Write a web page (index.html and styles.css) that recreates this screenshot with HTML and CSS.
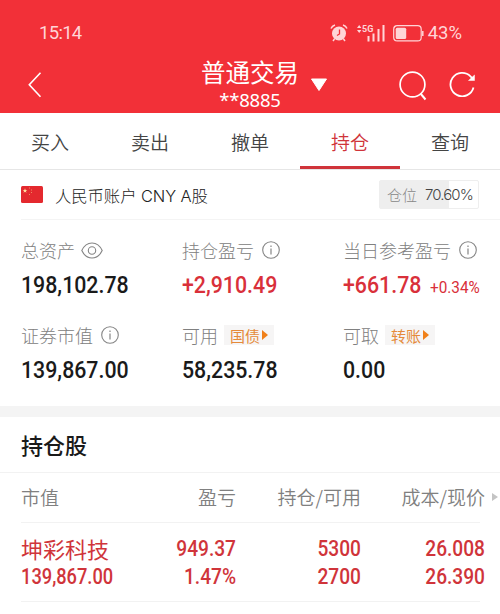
FILE: index.html
```html
<!DOCTYPE html>
<html lang="zh-CN">
<head>
    <meta charset="UTF-8">
    <meta name="viewport" content="width=device-width, initial-scale=1.0">
    <title>普通交易</title>
    <link rel="stylesheet" href="styles.css">
</head>
<body>
<header>
    <div class="status-bar">
        <span class="time">15:14</span>
        <div class="status-icons">
            <svg class="alarm" width="18" height="18" viewBox="0 0 18 18">
                <circle cx="9" cy="9.5" r="7" fill="#ffd5d7"/>
                <path d="M1 4.5Q2 2 5 1M13 1Q16 2 17 4.5M4.5 15L3 17M13.500 15L15 17" fill="none" stroke="#ffd5d7" stroke-width="1.5"/>
                <path d="M9.500 5.500V10L7 11.500" fill="none" stroke="#f23038" stroke-width="1.3"/>
            </svg>
            <svg class="signal" width="30" height="20" viewBox="0 0 30 20">
                <path d="M1 6L3.200 3L5.400 6ZM1 8L3.200 11L5.400 8Z" fill="#ffd5d7"/>
                <text x="6" y="9.600" class="net">5G</text>
                <path d="M12.500 14V19.500M17.500 11.500V19.500M22.500 7V19.500M27.500 3V19.500" stroke="#ffd5d7" stroke-width="2"/>
            </svg>
            <svg class="battery" width="31" height="17" viewBox="0 0 31 17">
                <rect x="0.700" y="0.700" width="27.500" height="15.200" rx="3.500" fill="none" stroke="#ffd5d7" stroke-width="1.2"/>
                <rect x="2.700" y="2.700" width="10.500" height="11.200" rx="1.500" fill="#ffd5d7"/>
                <path d="M29.800 6V11" stroke="#ffd5d7" stroke-width="1.5"/>
            </svg>
            <span class="percent">43%</span>
        </div>
    </div>
    <div class="nav-bar">
        <svg class="back" width="14" height="26" viewBox="0 0 14 26">
            <path d="M12.500 0.800L1.300 12.800L12.500 24.800" fill="none" stroke="#fff" stroke-width="1.6"/>
        </svg>
        <div class="title">
            <h1>普通交易</h1>
            <p>**8885</p>
        </div>
        <svg class="caret" width="18" height="14" viewBox="0 0 18 14">
            <path d="M1.500 1H16.500L9 12.500Z" fill="#fff" stroke="#fff" stroke-linejoin="round"/>
        </svg>
        <svg class="search" width="28" height="30" viewBox="0 0 28 30">
            <circle cx="13.500" cy="13.500" r="12.400" fill="none" stroke="#fff" stroke-width="1.7"/>
            <path d="M21.500 22.500L26.500 28.500" stroke="#fff" stroke-width="2"/>
        </svg>
        <svg class="refresh" width="27" height="26" viewBox="0 0 27 26">
            <path d="M24.500 16.500A11.700 11.700 0 1 1 21.500 5.300L24 8" fill="none" stroke="#fff" stroke-width="1.8"/>
            <path d="M25.500 4V9.500H19.500Z" fill="#fff" stroke="#fff" stroke-width="0.500"/>
        </svg>
    </div>
</header>

<nav class="tabs">
    <a>买入</a>
    <a>卖出</a>
    <a>撤单</a>
    <a class="active">持仓</a>
    <a>查询</a>
</nav>

<div class="account">
    <svg class="flag" width="22" height="17" viewBox="0 0 22 17">
        <rect width="22" height="17" rx="1.500" fill="#e4292e"/>
        <path d="M4 2.300L4.600 4L6.300 4L4.900 5.100L5.500 6.800L4 5.800L2.500 6.800L3.100 5.100L1.700 4L3.400 4Z" fill="#ffe0a0"/>
        <path d="M8 1.500h1v1h-1zM10 3.500h1v1h-1zM10 6h1v1h-1zM8 8h1v1h-1z" fill="#f08a60"/>
    </svg>
    <span class="account-name">人民币账户 CNY A股</span>
    <div class="position"><span>仓位</span><b>70.60%</b></div>
</div>

<section class="summary">
    <div class="item">
        <div class="label">总资产
            <svg class="eye" width="22" height="17" viewBox="0 0 22 17">
                <path d="M0.800 8.500C5.500 -1.500 16.500 -1.500 21.200 8.500C16.500 18.500 5.500 18.500 0.800 8.500Z" fill="none" stroke="#858585" stroke-width="1.1"/>
                <circle cx="11" cy="8.500" r="3.700" fill="none" stroke="#858585" stroke-width="1.1"/>
            </svg>
        </div>
        <div class="value"><span class="num">198,102.78</span></div>
    </div>
    <div class="item">
        <div class="label">持仓盈亏
            <svg class="info" width="18" height="18" viewBox="0 0 18 18">
                <circle cx="9" cy="9" r="8.300" fill="none" stroke="#858585" stroke-width="1.1"/>
                <path d="M9 7.500V13.500M9 4.500V6" stroke="#858585" stroke-width="1.2"/>
            </svg>
        </div>
        <div class="value red"><span class="num">+2,910.49</span></div>
    </div>
    <div class="item">
        <div class="label">当日参考盈亏
            <svg class="info" width="18" height="18" viewBox="0 0 18 18">
                <circle cx="9" cy="9" r="8.300" fill="none" stroke="#858585" stroke-width="1.1"/>
                <path d="M9 7.500V13.500M9 4.500V6" stroke="#858585" stroke-width="1.2"/>
            </svg>
        </div>
        <div class="value red"><span class="num">+661.78</span><span class="num rate">+0.34%</span></div>
    </div>
    <div class="item">
        <div class="label">证券市值
            <svg class="info" width="18" height="18" viewBox="0 0 18 18">
                <circle cx="9" cy="9" r="8.300" fill="none" stroke="#858585" stroke-width="1.1"/>
                <path d="M9 7.500V13.500M9 4.500V6" stroke="#858585" stroke-width="1.2"/>
            </svg>
        </div>
        <div class="value"><span class="num">139,867.00</span></div>
    </div>
    <div class="item">
        <div class="label">可用<span class="tag">国债</span></div>
        <div class="value"><span class="num">58,235.78</span></div>
    </div>
    <div class="item">
        <div class="label">可取<span class="tag">转账</span></div>
        <div class="value"><span class="num">0.00</span></div>
    </div>
</section>

<section class="holdings">
    <h2>持仓股</h2>
    <div class="row head">
        <span>市值</span>
        <span>盈亏</span>
        <span>持仓/可用</span>
        <span>成本/现价</span>
    </div>
    <div class="row stock">
        <div><span class="name">坤彩科技</span><span class="num">139,867.00</span></div>
        <div><span class="num">949.37</span><span class="num">1.47%</span></div>
        <div><span class="num">5300</span><span class="num">2700</span></div>
        <div><span class="num">26.008</span><span class="num">26.390</span></div>
    </div>
</section>
</body>
</html>
```
FILE: styles.css
```css
* {
    box-sizing: border-box;
}
body {
    font-family: "Noto Sans CJK SC", sans-serif;
    margin: 0;
    padding: 0;
    background-color: #fff;
    color: #444;
    height: 614px;
    overflow: hidden;
}
h1, h2, p {
    margin: 0;
}
svg {
    display: block;
    flex: none;
}
header {
    background-color: #f23038;
    color: #fff;
    height: 113px;
    padding-top: 20px;
}
.status-bar {
    display: flex;
    justify-content: space-between;
    height: 26px;
    padding: 0 38px 0 39px;
    align-items: center;
    color: #ffd5d7;
    font-family: Roboto, sans-serif;
    font-size: 18.5px;
    line-height: 26px;
}
.time {
    letter-spacing: -0.7px;
}
.status-icons {
    display: flex;
    align-items: center;
}
.signal {
    margin: -2px 7px 0 8px;
}
.net {
    font: bold 9px Roboto, sans-serif;
    fill: #ffd5d7;
}
.percent {
    margin-left: 4px;
}
.nav-bar {
    display: flex;
    align-items: flex-start;
    padding: 11px 24px 0 28px;
}
.back {
    margin-top: 15px;
}
.title {
    width: 100px;
    margin-left: 158px;
    text-align: center;
}
.title h1 {
    font-size: 24.5px;
    font-weight: 400;
    line-height: 29px;
    white-space: nowrap;
}
.title p {
    font-family: "Noto Sans", sans-serif;
    font-size: 18.5px;
    line-height: 24px;
    margin-top: 2px;
    letter-spacing: -0.2px;
}
.caret {
    margin: 21px 0 0 10px;
}
.search {
    margin: 14px 0 0 71px;
}
.refresh {
    margin: 14px 0 0 22px;
}

.tabs {
    display: flex;
    height: 57px;
    border-bottom: 1px solid #e6e6e6;
}
.tabs a {
    flex: 1;
    height: 56px;
    text-align: center;
    font-size: 19px;
    font-weight: 350;
    line-height: 57px;
}
.tabs .active {
    color: #d0343a;
    border-bottom: 3px solid #d0343a;
}

.account {
    display: flex;
    align-items: center;
    height: 50px;
    margin-left: 21px;
    padding-right: 21px;
    border-bottom: 1px solid #f4f4f4;
}
.account-name {
    flex: 1;
    margin-left: 12px;
    font-family: Inter, "Noto Sans CJK SC", sans-serif;
    font-size: 16.4px;
    font-weight: 300;
    letter-spacing: -0.1px;
    color: #222;
}
.position {
    display: flex;
    align-items: center;
    width: 100px;
    height: 29px;
    padding-left: 7px;
    border: 1px solid #eee;
    border-radius: 2px;
    background: linear-gradient(to right, #eee 70.6%, #fff 70.6%);
    color: #888;
    font-size: 15px;
    font-weight: 300;
}
.position b {
    margin-left: 8px;
    font-family: Inter, sans-serif;
    font-size: 15px;
    font-weight: 350;
    letter-spacing: -0.9px;
    color: #444;
}

.summary {
    display: grid;
    grid-template-columns: 161px 161px 1fr;
    grid-template-rows: 85px 85px;
    height: 186px;
    padding: 16px 0 0 21px;
}
.label {
    display: flex;
    align-items: center;
    height: 28px;
    font-size: 18px;
    font-weight: 300;
    color: #808080;
    white-space: nowrap;
}
.eye {
    margin-left: 6px;
}
.info {
    margin-left: 8px;
}
.tag {
    display: flex;
    align-items: center;
    height: 20px;
    margin-left: 6px;
    padding: 0 6px;
    background-color: #f6f5f5;
    color: #e58a3a;
    font-size: 15px;
    font-weight: 400;
}
.tag::after {
    content: "";
    margin-left: 2px;
    border-left: 6px solid #f08019;
    border-top: 5px solid transparent;
    border-bottom: 5px solid transparent;
}
.value {
    display: flex;
    align-items: baseline;
    height: 36px;
    margin-top: 3px;
    color: #1a1a1a;
    font-size: 24.8px;
    line-height: 36px;
}
/* condensed figures */
.num {
    display: inline-block;
    font-family: Roboto, sans-serif;
    font-weight: 500;
    transform: scaleX(0.86);
    transform-origin: left;
}
.red {
    color: #d9303a;
}
.value .rate {
    margin-left: -4px;
    font-size: 17px;
    font-weight: 400;
    transform: scaleX(0.9);
}

.holdings {
    border-top: 11px solid #f4f4f4;
}
.holdings h2 {
    height: 56px;
    padding-left: 21px;
    border-bottom: 1px solid #f2f2f2;
    color: #1a1a1a;
    font-size: 22px;
    font-weight: 500;
    line-height: 55px;
}
.row {
    display: grid;
    grid-template-columns: 90px 125px 125px 124px;
    margin-left: 21px;
    margin-right: 20px;
    border-bottom: 1px solid #f2f2f2;
    text-align: right;
}
.row > :first-child {
    text-align: left;
}
.head {
    position: relative;
    height: 50px;
    color: #808080;
    font-size: 19px;
    font-weight: 350;
    line-height: 48px;
}
.head::after {
    content: "";
    position: absolute;
    left: 471px;
    top: 20px;
    border-left: 6px solid #c4c4c4;
    border-top: 4px solid transparent;
    border-bottom: 4px solid transparent;
}
.stock {
    height: 79px;
    padding-top: 12px;
    color: #d0343a;
    font-size: 22px;
    line-height: 28px;
}
.stock .name, .stock .num {
    display: block;
    height: 28px;
    white-space: nowrap;
}
.stock .name {
    line-height: 27px;
}
.stock .num {
    font-weight: 500;
    transform: scaleX(0.87);
    transform-origin: right;
}
.stock > :first-child .num {
    transform: scaleX(0.83);
    transform-origin: left;
}
```
